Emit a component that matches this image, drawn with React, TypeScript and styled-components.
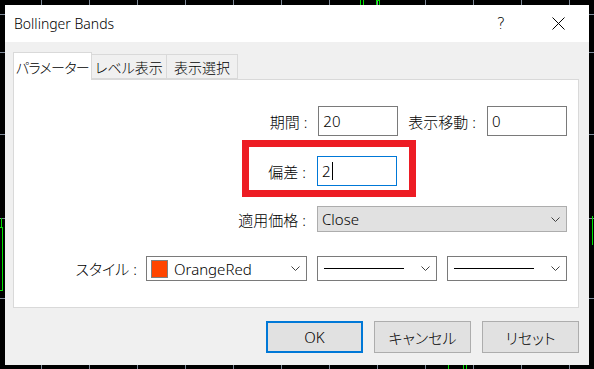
import React from "react"
import styled, { createGlobalStyle } from "styled-components"

const GlobalStyle = createGlobalStyle`
  html, body {
    margin: 0;
    padding: 0;
    background: #000;
  }

  body {
    font-family: "Noto Sans", "Noto Sans CJK JP", sans-serif;
    font-weight: 300;
    font-feature-settings: "palt";
  }
`

const Page = styled.div`
  position: relative;
  width: 594px;
  height: 369px;
  padding: 5px;
  box-sizing: border-box;
  background: #000;
  overflow: hidden;
`

const Chart = styled.svg`
  position: absolute;
  left: 0;
  top: 0;
`

const Dialog = styled.div`
  position: relative;
  width: 584px;
  height: 360px;
  background: #f0f0f0;
  display: flex;
  flex-direction: column;
  color: #000;
  font-size: 14px;
`

const TitleBar = styled.div`
  height: 37px;
  flex: none;
  background: #fff;
  display: flex;
  align-items: center;
  padding: 0 24px 0 9px;
`

const Title = styled.span`
  font-size: 14px;
  flex: 1;
`

const TitleButtons = styled.div`
  display: flex;
  align-items: center;
  gap: 44px;
`

const HelpMark = styled.span`
  font-family: "DejaVu Sans", sans-serif;
  font-size: 16px;
  width: 14px;
  text-align: center;
`

const Body = styled.div`
  padding: 10px 10px 0 8px;
  display: flex;
  flex-direction: column;
`

const TabStrip = styled.div`
  height: 27px;
  display: flex;
  align-items: flex-end;
`

const Tab = styled.div<{ $active?: boolean; $width: number }>`
  position: relative;
  z-index: ${(p) => (p.$active ? 1 : 0)};
  width: ${(p) => p.$width}px;
  height: ${(p) => (p.$active ? 28 : 25)}px;
  margin-bottom: ${(p) => (p.$active ? -1 : 0)}px;
  box-sizing: border-box;
  border: 1px solid #d9d9d9;
  border-bottom: ${(p) => (p.$active ? "none" : "1px solid #d9d9d9")};
  border-left: ${(p) => (p.$active ? "1px solid #d9d9d9" : "none")};
  background: ${(p) => (p.$active ? "#fff" : "#f0f0f0")};
  display: flex;
  align-items: center;
  justify-content: center;
  white-space: nowrap;
  font-size: 14px;
  letter-spacing: ${(p) => (p.$active ? -0.6 : 0)}px;
  padding-top: ${(p) => (p.$active ? 0 : 1)}px;
`

const Panel = styled.div`
  height: 229px;
  box-sizing: border-box;
  border: 1px solid #d9d9d9;
  background: #fff;
  padding: 26px 11px 0 0;
  display: flex;
  flex-direction: column;
`

const Row = styled.div<{ $gap: number; $trail?: number }>`
  position: relative;
  display: flex;
  align-items: center;
  justify-content: flex-end;
  margin-top: ${(p) => p.$gap}px;
  padding-right: ${(p) => p.$trail ?? 0}px;
`

const Group = styled.div`
  position: relative;
  display: flex;
  align-items: center;
`

const Label = styled.span<{ $space?: number; $lead?: number }>`
  margin-right: ${(p) => p.$space ?? 11}px;
  margin-left: ${(p) => p.$lead ?? 0}px;
  white-space: nowrap;
  font-size: 15px;
`

const Colon = styled.span`
  margin-left: 4px;
`

const TextBox = styled.div<{ $focused?: boolean }>`
  width: 80px;
  height: 30px;
  box-sizing: border-box;
  border: 1px solid ${(p) => (p.$focused ? "#0078d7" : "#7a7a7a")};
  background: #fff;
  padding-left: 4px;
  display: flex;
  align-items: center;
  font-size: 15px;
`

const Caret = styled.span`
  width: 1px;
  height: 18px;
  background: #000;
  margin-left: 1px;
`

const Select = styled.div<{ $width: number; $height: number; $flat?: boolean }>`
  width: ${(p) => p.$width}px;
  height: ${(p) => p.$height}px;
  box-sizing: border-box;
  border: 1px solid ${(p) => (p.$flat ? "#adadad" : "#7a7a7a")};
  background: ${(p) => (p.$flat ? "#e1e1e1" : "#fff")};
  display: flex;
  align-items: center;
  padding: 0 6px 0 4px;
  gap: 6px;
  font-size: 15px;
`

const SelectText = styled.span`
  flex: 1;
`

const Swatch = styled.span`
  width: 17px;
  height: 18px;
  box-sizing: border-box;
  border: 1px solid #808080;
  background: #ff4500;
  flex: none;
`

const LineSample = styled.span`
  flex: 1;
  height: 1px;
  background: #000;
  margin: 0 11px 0 2px;
`

const Highlight = styled.div`
  position: absolute;
  right: -19px;
  top: -16px;
  width: 174px;
  height: 57px;
  box-sizing: border-box;
  border: 7px solid #ed1c24;
  pointer-events: none;
`

const ButtonBar = styled.div`
  display: flex;
  justify-content: flex-end;
  gap: 11px;
  padding: 13px 0 0;
`

const Button = styled.div<{ $default?: boolean }>`
  width: 97px;
  height: 32px;
  box-sizing: border-box;
  border: ${(p) => (p.$default ? "2px solid #0078d7" : "1px solid #adadad")};
  background: #e1e1e1;
  display: flex;
  align-items: center;
  justify-content: center;
  font-size: 15px;
`

const Chevron = () => (
  <svg width="9" height="5" viewBox="0 0 9 5">
    <polyline points="0.5,0.5 4.5,4.5 8.5,0.5" fill="none" stroke="#404040" strokeWidth="1" />
  </svg>
)

const CloseIcon = () => (
  <svg width="13" height="13" viewBox="0 0 13 13">
    <path d="M0.5 0.5 L12.5 12.5 M12.5 0.5 L0.5 12.5" stroke="#000" strokeWidth="1" />
  </svg>
)

const tickXs = [41, 89, 137, 185, 233, 281, 329, 377, 425, 473, 521, 569]
const tickYs = [14, 52, 134, 218, 298]

const ChartBackdrop = () => (
  <Chart width="594" height="369">
    {tickXs.map((x) => (
      <g key={x} stroke="#7f8a99" strokeWidth="1">
        <line x1={x + 0.5} y1="0" x2={x + 0.5} y2="5" />
        <line x1={x + 0.5} y1="365" x2={x + 0.5} y2="369" />
      </g>
    ))}
    {tickYs.map((y) => (
      <g key={y} stroke="#7f8a99" strokeWidth="1">
        <line x1="0" y1={y + 0.5} x2="5" y2={y + 0.5} />
        <line x1="589" y1={y + 0.5} x2="594" y2={y + 0.5} />
      </g>
    ))}
    <g stroke="#00e000" strokeWidth="1" fill="none">
      <line x1="360.5" y1="0" x2="360.5" y2="5" />
      <line x1="363.5" y1="0" x2="363.5" y2="5" />
      <rect x="376.5" y="0.5" width="3" height="5" />
      <line x1="1.5" y1="218" x2="1.5" y2="227" />
      <rect x="-1.5" y="227.5" width="4" height="63" />
      <line x1="592.5" y1="216" x2="592.5" y2="245" />
      <line x1="448.5" y1="365" x2="448.5" y2="369" />
      <line x1="463.5" y1="365" x2="463.5" y2="369" />
      <line x1="466.5" y1="365" x2="466.5" y2="369" />
    </g>
  </Chart>
)

const App = (): JSX.Element => {
  return (
    <Page>
      <GlobalStyle />
      <ChartBackdrop />
      <Dialog>
        <TitleBar>
          <Title>Bollinger Bands</Title>
          <TitleButtons>
            <HelpMark>?</HelpMark>
            <CloseIcon />
          </TitleButtons>
        </TitleBar>
        <Body>
          <TabStrip>
            <Tab $active $width={79}>パラメーター</Tab>
            <Tab $width={75}>レベル表示</Tab>
            <Tab $width={71}>表示選択</Tab>
          </TabStrip>
          <Panel>
            <Row $gap={0}>
              <Label>
                期間<Colon>:</Colon>
              </Label>
              <TextBox>20</TextBox>
              <Label $lead={10} $space={11}>
                表示移動<Colon>:</Colon>
              </Label>
              <TextBox>0</TextBox>
            </Row>
            <Row $gap={20} $trail={170}>
              <Group>
                <Label>
                  偏差<Colon>:</Colon>
                </Label>
                <TextBox $focused>
                  2<Caret />
                </TextBox>
                <Highlight />
              </Group>
            </Row>
            <Row $gap={20}>
              <Label>
                適用価格<Colon>:</Colon>
              </Label>
              <Select $width={250} $height={26} $flat>
                <SelectText>Close</SelectText>
                <Chevron />
              </Select>
            </Row>
            <Row $gap={24}>
              <Label $space={9}>
                スタイル<Colon>:</Colon>
              </Label>
              <Select $width={161} $height={25}>
                <Swatch />
                <SelectText>OrangeRed</SelectText>
                <Chevron />
              </Select>
              <Select $width={120} $height={25} style={{ marginLeft: 10 }}>
                <LineSample />
                <Chevron />
              </Select>
              <Select $width={120} $height={25} style={{ marginLeft: 10 }}>
                <LineSample />
                <Chevron />
              </Select>
            </Row>
          </Panel>
          <ButtonBar>
            <Button $default>OK</Button>
            <Button>キャンセル</Button>
            <Button>リセット</Button>
          </ButtonBar>
        </Body>
      </Dialog>
    </Page>
  )
}

export default App
